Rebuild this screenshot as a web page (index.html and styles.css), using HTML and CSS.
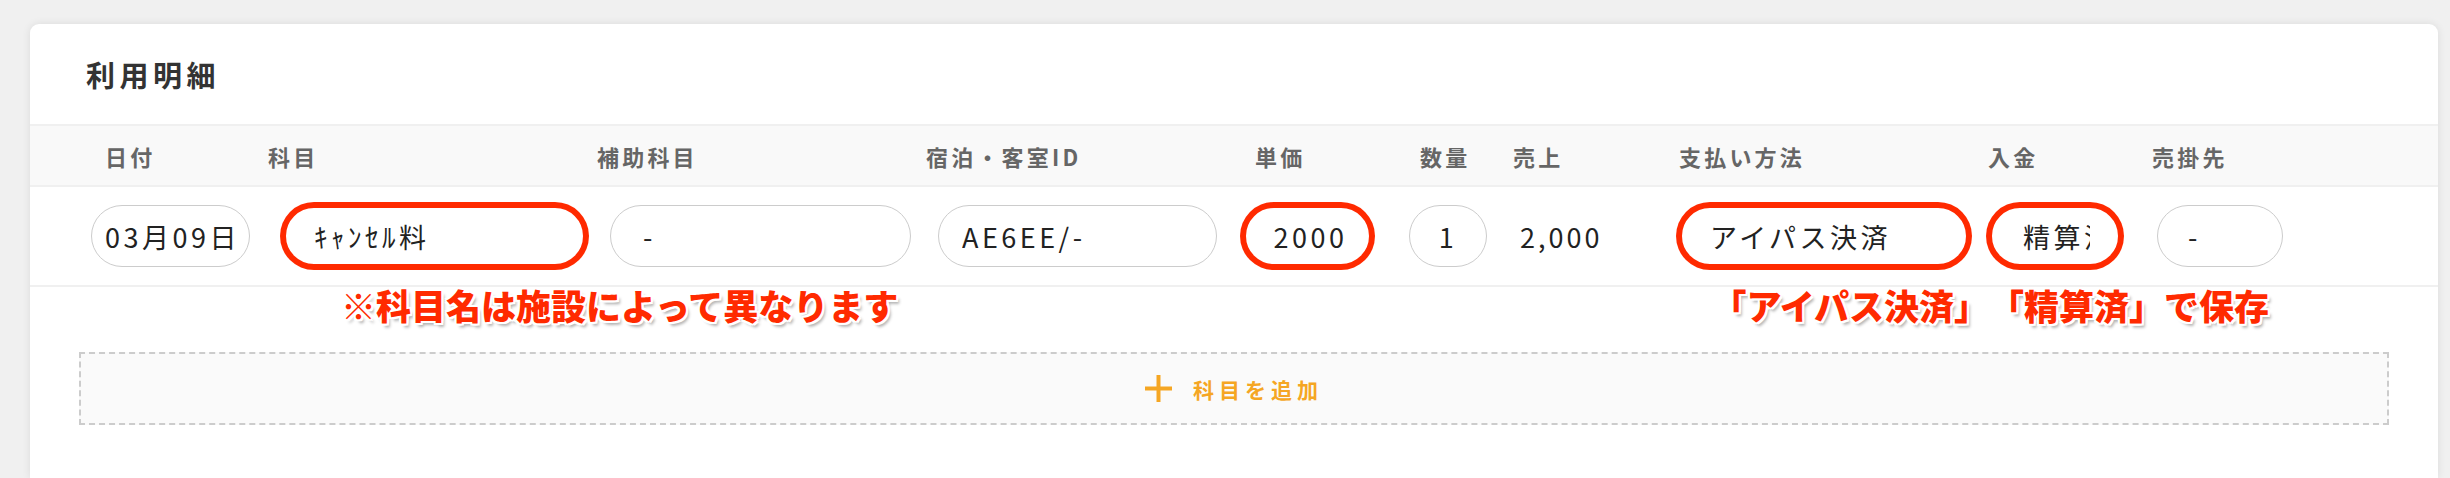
FILE: index.html
```html
<!DOCTYPE html>
<html lang="ja">
<head>
  <meta charset="UTF-8" />
  <title>利用明細</title>
  <link rel="stylesheet" href="styles.css">
</head>
<body>
  <div class="card">
    <h2 class="card-title">利用明細</h2>

    <div class="head-band">
      <div class="grid">
        <div class="th th-date">日付</div>
        <div class="th">科目</div>
        <div class="th">補助科目</div>
        <div class="th">宿泊・客室ID</div>
        <div class="th th-price">単価</div>
        <div class="th th-qty">数量</div>
        <div class="th">売上</div>
        <div class="th">支払い方法</div>
        <div class="th">入金</div>
        <div class="th">売掛先</div>
      </div>
    </div>

    <div class="row">
      <div class="grid">
        <div class="cell"><input class="field f-date" value="03月09日" readonly></div>
        <div class="cell"><input class="field f-item mark" value="ｷｬﾝｾﾙ料" readonly></div>
        <div class="cell"><input class="field f-sub" value="-" readonly></div>
        <div class="cell"><input class="field f-room" value="AE6EE/-" readonly></div>
        <div class="cell"><input class="field f-price mark" value="2000" readonly></div>
        <div class="cell"><input class="field f-qty" value="1" readonly></div>
        <div class="cell"><span class="sales">2,000</span></div>
        <div class="cell"><input class="field f-pay mark" value="アイパス決済" readonly></div>
        <div class="cell"><input class="field f-paid mark" value="精算済" readonly></div>
        <div class="cell"><input class="field f-credit" value="-" readonly></div>
      </div>
    </div>

    <div class="notes">
      <span class="note note-item">※科目名は施設によって異なります</span>
      <span class="note note-pay">「アイパス決済」「精算済」で保存</span>
    </div>

    <div class="add-box">
      <svg class="plus" width="27" height="27" viewBox="0 0 27 27">
        <rect x="11.5" y="0" width="4" height="27" fill="#f5a623"/>
        <rect x="0" y="11.5" width="27" height="4" fill="#f5a623"/>
      </svg>
      <span class="add-label">科目を追加</span>
    </div>
  </div>
</body>
</html>
```

FILE: styles.css
```css
body {
  margin: 0;
  padding: 24px 12px 0 30px;
  background-color: #f0f0f0;
  font-family: "Noto Sans CJK JP", "Noto Sans", sans-serif;
  color: #222;
  overflow: hidden;
  text-spacing-trim: space-all;
}

.card {
  background: #fff;
  border-radius: 9px 9px 0 0;
  box-shadow: 0 0 8px rgba(0, 0, 0, 0.09);
  padding-bottom: 53px;
}

.card-title {
  margin: 0;
  height: 100px;
  display: flex;
  align-items: center;
  padding-left: 56px;
  font-size: 29px;
  font-weight: 700;
  letter-spacing: 4.5px;
  color: #333;
}

.grid {
  display: grid;
  grid-template-columns: 177px 329px 329px 317px 166px 104px 166px 309px 164px 1fr;
  padding-left: 61px;
  align-items: center;
}

.head-band {
  background: #f9f9f9;
  border-top: 2px solid #f0f0f0;
  border-bottom: 2px solid #f0f0f0;
  height: 59px;
  display: flex;
  align-items: center;
}

.head-band .grid {
  width: 100%;
}

.th {
  font-size: 22px;
  font-weight: 700;
  letter-spacing: 3.2px;
  color: #666;
  white-space: nowrap;
}

.th-date { padding-left: 14px; }
.th-price { padding-left: 12px; }
.th-qty { padding-left: 11px; }

.row {
  height: 98px;
  border-bottom: 2px solid #f0f0f0;
  display: flex;
  align-items: center;
}

.row .grid {
  width: 100%;
}

.cell {
  display: flex;
  align-items: center;
}

.field {
  box-sizing: border-box;
  height: 62px;
  border: 1.5px solid #ccc;
  border-radius: 31px;
  background: #fff;
  font-family: "Noto Sans CJK JP", "Noto Sans", sans-serif;
  font-size: 27px;
  letter-spacing: 3.5px;
  color: #222;
  padding: 0 28px;
  outline: none;
}

.mark {
  border: 3px solid #ff2a00;
  box-shadow: 0 0 0 3px #ff2a00;
}

.f-date { width: 159px; padding: 0 8px 0 13px; }
.f-item { width: 303px; margin-left: 15px; }
.f-sub { width: 301px; margin-left: 13px; padding-left: 32px; }
.f-room { width: 279px; margin-left: 12px; padding-left: 23px; }
.f-price { width: 129px; padding: 0 6px 0 12px; text-align: center; }
.f-qty { width: 78px; padding: 0 6px; text-align: center; }
.f-pay { width: 290px; }
.f-paid { width: 132px; margin-left: 1px; padding: 0 28px 0 31px; }
.f-credit { width: 126px; margin-left: 5px; padding-left: 30px; }

.sales {
  margin-left: 7px;
  font-size: 27px;
  letter-spacing: 3px;
  color: #222;
}

.notes {
  height: 65px;
  display: flex;
  align-items: flex-start;
}

.note {
  font-size: 35px;
  line-height: 35px;
  font-weight: 900;
  color: #ff2a00;
  white-space: nowrap;
  text-shadow:
    -2px 0 0 #fff, 2px 0 0 #fff, 0 -2px 0 #fff, 0 2px 0 #fff,
    -2px -2px 0 #fff, 2px -2px 0 #fff, -2px 2px 0 #fff, 2px 2px 0 #fff,
    3px 4px 3px rgba(0, 0, 0, 0.3);
}

.note-item { margin-left: 311px; }
.note-pay { margin-left: auto; margin-right: 169px; }

.add-box {
  margin: 0 49px;
  height: 73px;
  box-sizing: border-box;
  border: 2px dashed #ccc;
  background: #fafafa;
  display: flex;
  align-items: center;
  justify-content: center;
  gap: 21px;
}

.plus {
  display: block;
}

.add-label {
  font-size: 21px;
  font-weight: 700;
  letter-spacing: 5px;
  color: #f5a623;
}
```
